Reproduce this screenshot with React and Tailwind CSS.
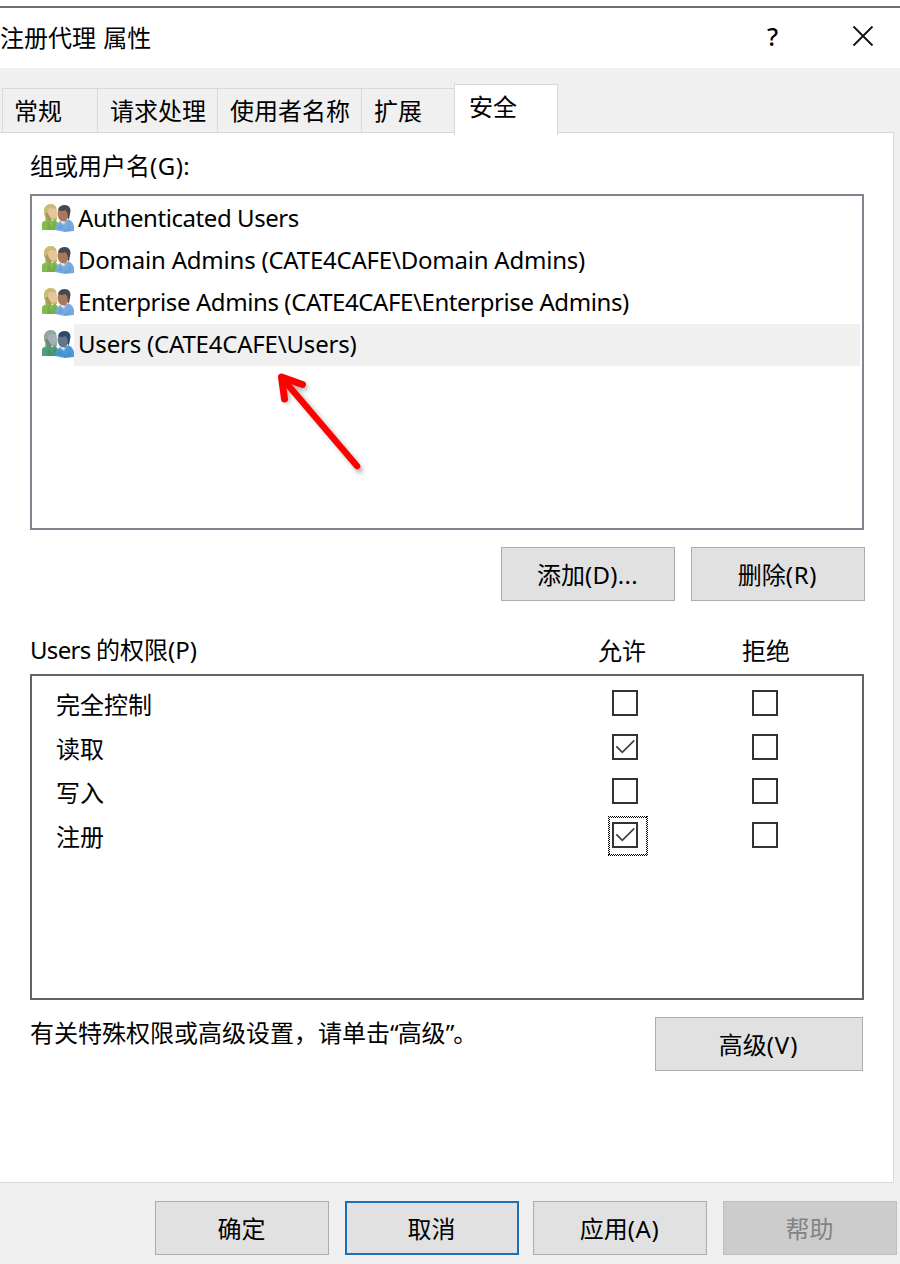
import React from 'react';

const principals = [
  { name: 'Authenticated Users', tracking: 'tracking-[-0.43px]' },
  { name: 'Domain Admins (CATE4CAFE\\Domain Admins)', tracking: 'tracking-[-0.22px]' },
  { name: 'Enterprise Admins (CATE4CAFE\\Enterprise Admins)', tracking: 'tracking-[-0.41px]' },
  { name: 'Users (CATE4CAFE\\Users)', tracking: 'tracking-[-0.2px]', selected: true },
];

const permissions = [
  { name: '完全控制', allow: false },
  { name: '读取', allow: true },
  { name: '写入', allow: false },
  { name: '注册', allow: true, focused: true },
];

function UsersIcon({ selected }) {
  const c = selected
    ? { hair: '#8fa99b', hair2: '#71897f', face: '#a3b2b4', green: '#4f9f78', green2: '#3d8664', dark: '#2c4a6d', face2: '#64768c', blue: '#4b98d6', blue2: '#3a83c4', white: '#a9c9dd' }
    : { hair: '#c9bd75', hair2: '#a89858', face: '#e6c59b', green: '#83bb4f', green2: '#649d3d', dark: '#46494f', face2: '#a9795a', blue: '#78aade', blue2: '#5f94cf', white: '#b9d3ea' };
  return (
    <svg width="32" height="32" viewBox="0 -1 32 32" className="shrink-0">
      <path d="M2 5Q4 0 8.500 0Q14 0 14.500 5L15 16L3 16Q3.500 12 2 10Z" fill={c.hair} />
      <path d="M3 10Q5 14 5 18L10 18L7 8Z" fill={c.hair2} />
      <path d="M6.500 5Q10 3 14 5L15 10Q13.500 15 11 15Q7 13 6 9Z" fill={c.face} />
      <path d="M0 19Q2 16 6 16L9 18L13 15L16 19L14 26L0 26Z" fill={c.green} />
      <path d="M6 17L10 24L12 17L14 20L13 26L5 26Z" fill={c.green2} opacity=".45" />
      <path d="M16 6Q17 1 23 1Q28.500 1.500 28.500 7L27 15L17 10Z" fill={c.dark} />
      <path d="M16 6Q20 8 23 6L25 8L26 12L24 18L19 17Q16 15 15.500 10Z" fill={c.face2} />
      <path d="M13 25Q14 20 18 17L22 20L26 15Q31 17 32 22L32 27L23 28L13 26Z" fill={c.blue} />
      <path d="M15 25L19 20L22 27L29 27L28 21L25 25Z" fill={c.blue2} opacity=".4" />
      <path d="M18 17L21 19L24 17L22 21L19 19Z" fill={c.white} />
    </svg>
  );
}

function Button({ children, className }) {
  return (
    <button className={`flex h-[54px] shrink-0 items-center justify-center border text-[24px] leading-[32px] ${className}`}>
      <span className="pt-px pr-px">{children}</span>
    </button>
  );
}

const plain = 'border-[#adadad] bg-[#e1e1e1]';

function Checkbox({ checked }) {
  return (
    <span className="block h-[26px] w-[26px] border-2 border-[#333] bg-white">
      {checked && (
        <svg width="22" height="22" viewBox="0 0 22 22" fill="none" stroke="#404040" strokeWidth="1.7">
          <path d="M2.300 10.300L8.300 16.300L20.300 4.300" />
        </svg>
      )}
    </span>
  );
}

function Tab({ children, className }) {
  return (
    <div className={`h-11 border-t border-r border-[#d9d9d9] bg-[#f0f0f0] pt-[6px] ${className}`}>{children}</div>
  );
}

export default function App() {
  return (
    <div className="flex h-[1264px] w-[900px] flex-col overflow-hidden bg-[#f0f0f0] font-['Noto_Sans','Noto_Sans_CJK_SC',sans-serif] text-[24px] leading-[32px] whitespace-nowrap text-black">
      <div className="h-2 shrink-0 border-b-2 border-[#6e6e6e] bg-white" />
      <header className="flex h-[60px] shrink-0 items-start bg-white pt-[13px]">
        <h1 className="flex-1 pt-px [word-spacing:1px]">注册代理 属性</h1>
        <span className="-mt-px mr-[71px] w-[14px] text-[25px] font-medium">?</span>
        <svg width="22" height="22" viewBox="0 0 22 22" className="mt-[4px] mr-[26px]" stroke="#111" strokeWidth="1.8">
          <path d="M1.500 1.500L20.500 20.500M20.500 1.500L1.500 20.500" />
        </svg>
      </header>

      <nav className="flex h-16 shrink-0 items-end pl-[2px]">
        <Tab className="w-[96px] border-l pl-[11px]">常规</Tab>
        <Tab className="w-[120px] pl-3">请求处理</Tab>
        <Tab className="w-[144px] pl-3">使用者名称</Tab>
        <Tab className="w-[92px] border-r-0 pl-3">扩展</Tab>
        <div className="z-10 -mb-[3px] h-[51px] w-[104px] border border-b-0 border-[#d9d9d9] bg-white pt-[6px] pl-[14px]">安全</div>
      </nav>

      <main className="flex h-[1051px] w-[894px] shrink-0 flex-col border-t border-r border-b border-[#d9d9d9] bg-white pl-[30px]">
        <div className="h-[61px] pt-[17px]">组或用户名<span className="tracking-[0.5px]">(G):</span></div>
        <div className="relative h-[336px] w-[834px] shrink-0 border-2 border-[#82858f] pt-[2px] pr-[2px] pl-[10px]">
          {principals.map((p) => (
            <div key={p.name} className="flex h-[42px] items-center">
              <UsersIcon selected={p.selected} />
              <div className={`flex h-[42px] flex-1 items-center pb-[2px] pl-[4px] ${p.tracking} ${p.selected ? 'bg-[#f0f0f0]' : ''}`}>
                {p.name}
              </div>
            </div>
          ))}
          <svg width="110" height="120" viewBox="0 0 110 120" className="absolute top-[164px] left-[228px]" fill="none" strokeLinecap="round" strokeLinejoin="round">
            <g className="blur-[2px]" stroke="#000" strokeOpacity=".3" strokeWidth="6">
              <path d="M27 22L100 110M27 40L24 20L45 28" />
            </g>
            <path d="M22 18L97 106" stroke="red" strokeWidth="6.500" />
            <path d="M24.500 39L21.500 17L42.500 24.500" stroke="red" strokeWidth="7" />
          </svg>
        </div>
        <div className="mt-[17px] flex gap-4 pl-[471px]">
          <Button className={`w-[174px] ${plain}`}>添加<span className="tracking-[0.3px]">(D)...</span></Button>
          <Button className={`w-[174px] ${plain}`}>删除<span className="tracking-[0.7px]">(R)</span></Button>
        </div>
        <div className="flex h-[73px] shrink-0 pt-[33px]">
          <div className="w-[568px]"><span className="tracking-[-0.7px]">Users </span>的权限(P)</div>
          <div className="w-[144px] pt-px">允许</div>
          <div className="pt-px">拒绝</div>
        </div>
        <div className="h-[326px] w-[834px] shrink-0 border-2 border-[#646464] pt-3">
          {permissions.map((p) => (
            <div key={p.name} className="flex h-11 items-start pl-6">
              <span className="w-[556px] pt-px">{p.name}</span>
              <span className="relative mt-[2px] w-[140px]">
                <Checkbox checked={p.allow} />
                {p.focused && (
                  <svg width="40" height="40" viewBox="0 0 40 40" className="absolute -top-[6px] -left-[4px]" shapeRendering="crispEdges" fill="none" stroke="#000" strokeDasharray="1 1">
                    <path d="M0 .5H40M0 39.500H40M.5 0V40M39.500 0V40" />
                    <path d="M1 1.500H39M1 38.500H39M1.500 1V39M38.500 1V39" />
                  </svg>
                )}
              </span>
              <span className="mt-[2px]"><Checkbox /></span>
            </div>
          ))}
        </div>
        <div className="mt-[17px] flex">
          <div className="w-[625px]">有关特殊权限或高级设置，请单击<span className="tracking-[-1px]">“</span>高级<span className="tracking-[-1px]">”</span>。</div>
          <Button className={`w-[208px] ${plain}`}>高级<span className="tracking-[0.9px]">(V)</span></Button>
        </div>
      </main>

      <footer className="flex shrink-0 pt-[18px] pl-[155px]">
        <Button className={`mr-4 w-[174px] ${plain}`}>确定</Button>
        <Button className="mr-[14px] w-[174px] border-2 border-[#1c70b5] bg-[#e1e1e1]">取消</Button>
        <Button className={`mr-4 w-[174px] ${plain}`}>应用<span className="tracking-[0.6px]">(A)</span></Button>
        <Button className="w-[174px] border-[#bfbfbf] bg-[#ccc] text-[#838383]">帮助</Button>
      </footer>
    </div>
  );
}
